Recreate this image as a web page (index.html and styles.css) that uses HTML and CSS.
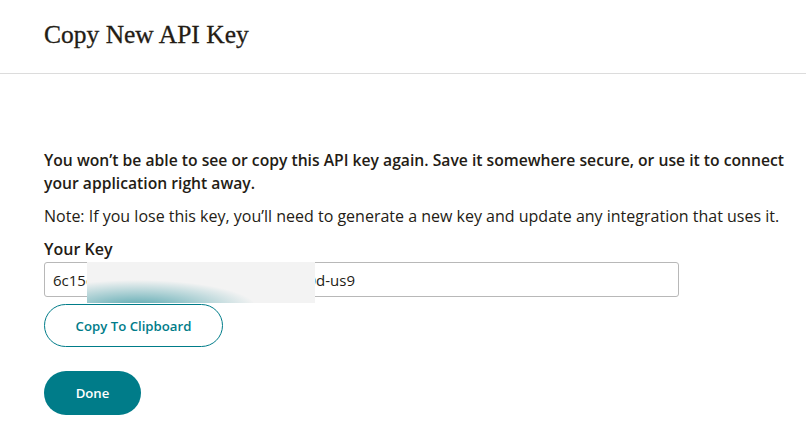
FILE: index.html
```html
<!DOCTYPE html>
<html lang="en-US">
<head>
<meta charset="utf-8">
<title>Copy New API Key</title>
<link rel="stylesheet" href="styles.css">
</head>
<body>

<div class="header">
  <h1>Copy New API Key</h1>
</div>

<div class="content">
  <p class="warning">You won’t be able to see or copy this API key again. Save it somewhere secure, or use it to connect your application right away.</p>
  <p class="note">Note: If you lose this key, you’ll need to generate a new key and update any integration that uses it.</p>

  <label class="key-label" for="apiKey">Your Key</label>
  <div class="key-field">
    <input id="apiKey" class="key-input" type="text" value="6c15c00000000000000000000000000d-us9" readonly>
    <div class="redact"></div>
  </div>

  <button class="btn btn-outline">Copy To Clipboard</button>
  <button class="btn btn-solid">Done</button>
</div>

</body>
</html>
```

FILE: styles.css
```css
body { margin: 0; background: #fff; color: #241c15; font-family: 'Open Sans', sans-serif; }

.header { height: 74px; border-bottom: 1px solid #dcdcdc; padding: 0 44px 4px; box-sizing: border-box; display: flex; align-items: center; }

h1 { margin: 0; font-family: 'Liberation Serif', serif; font-size: 25.5px; font-weight: normal; color: #241c15; -webkit-text-stroke: 0.3px #241c15; }

.content { padding: 75px 12px 0 44px; display: flex; flex-direction: column; align-items: flex-start; }

p { margin: 0; font-size: 16px; line-height: 23px; }

p.warning { font-weight: 600; font-size: 15.7px; }

p.note { margin-top: 10px; color: #241c15; }

.key-label { font-size: 16px; font-weight: 600; margin-top: 10px; line-height: 22px; }

.key-field { position: relative; margin-top: 2px; }

.key-input {
  width: 635px;
  height: 35px;
  box-sizing: border-box;
  border: 1px solid #b8b8b8;
  border-radius: 3px;
  padding: 0 8px;
  font-family: 'Open Sans', sans-serif;
  font-size: 15px;
  color: #241c15;
  outline: none;
}

.redact {
  position: absolute;
  left: 43px;
  top: 0;
  width: 228px;
  height: 41px;
  background:
    radial-gradient(ellipse 120px 28px at 50px 46px, rgba(0,124,137,0.65), rgba(0,124,137,0) 100%),
    #f3f3f3;
}

.btn {
  border-radius: 22px;
  font-family: 'Open Sans', sans-serif;
  font-size: 13.2px;
  font-weight: 600;
  cursor: pointer;
}

.btn-outline { margin-top: 7px; width: 179px; height: 43px; background: #fff; color: #007c89; border: 1px solid #007c89; }

.btn-solid { margin-top: 24px; width: 97px; height: 44px; background: #007c89; color: #fff; border: none; }
```
